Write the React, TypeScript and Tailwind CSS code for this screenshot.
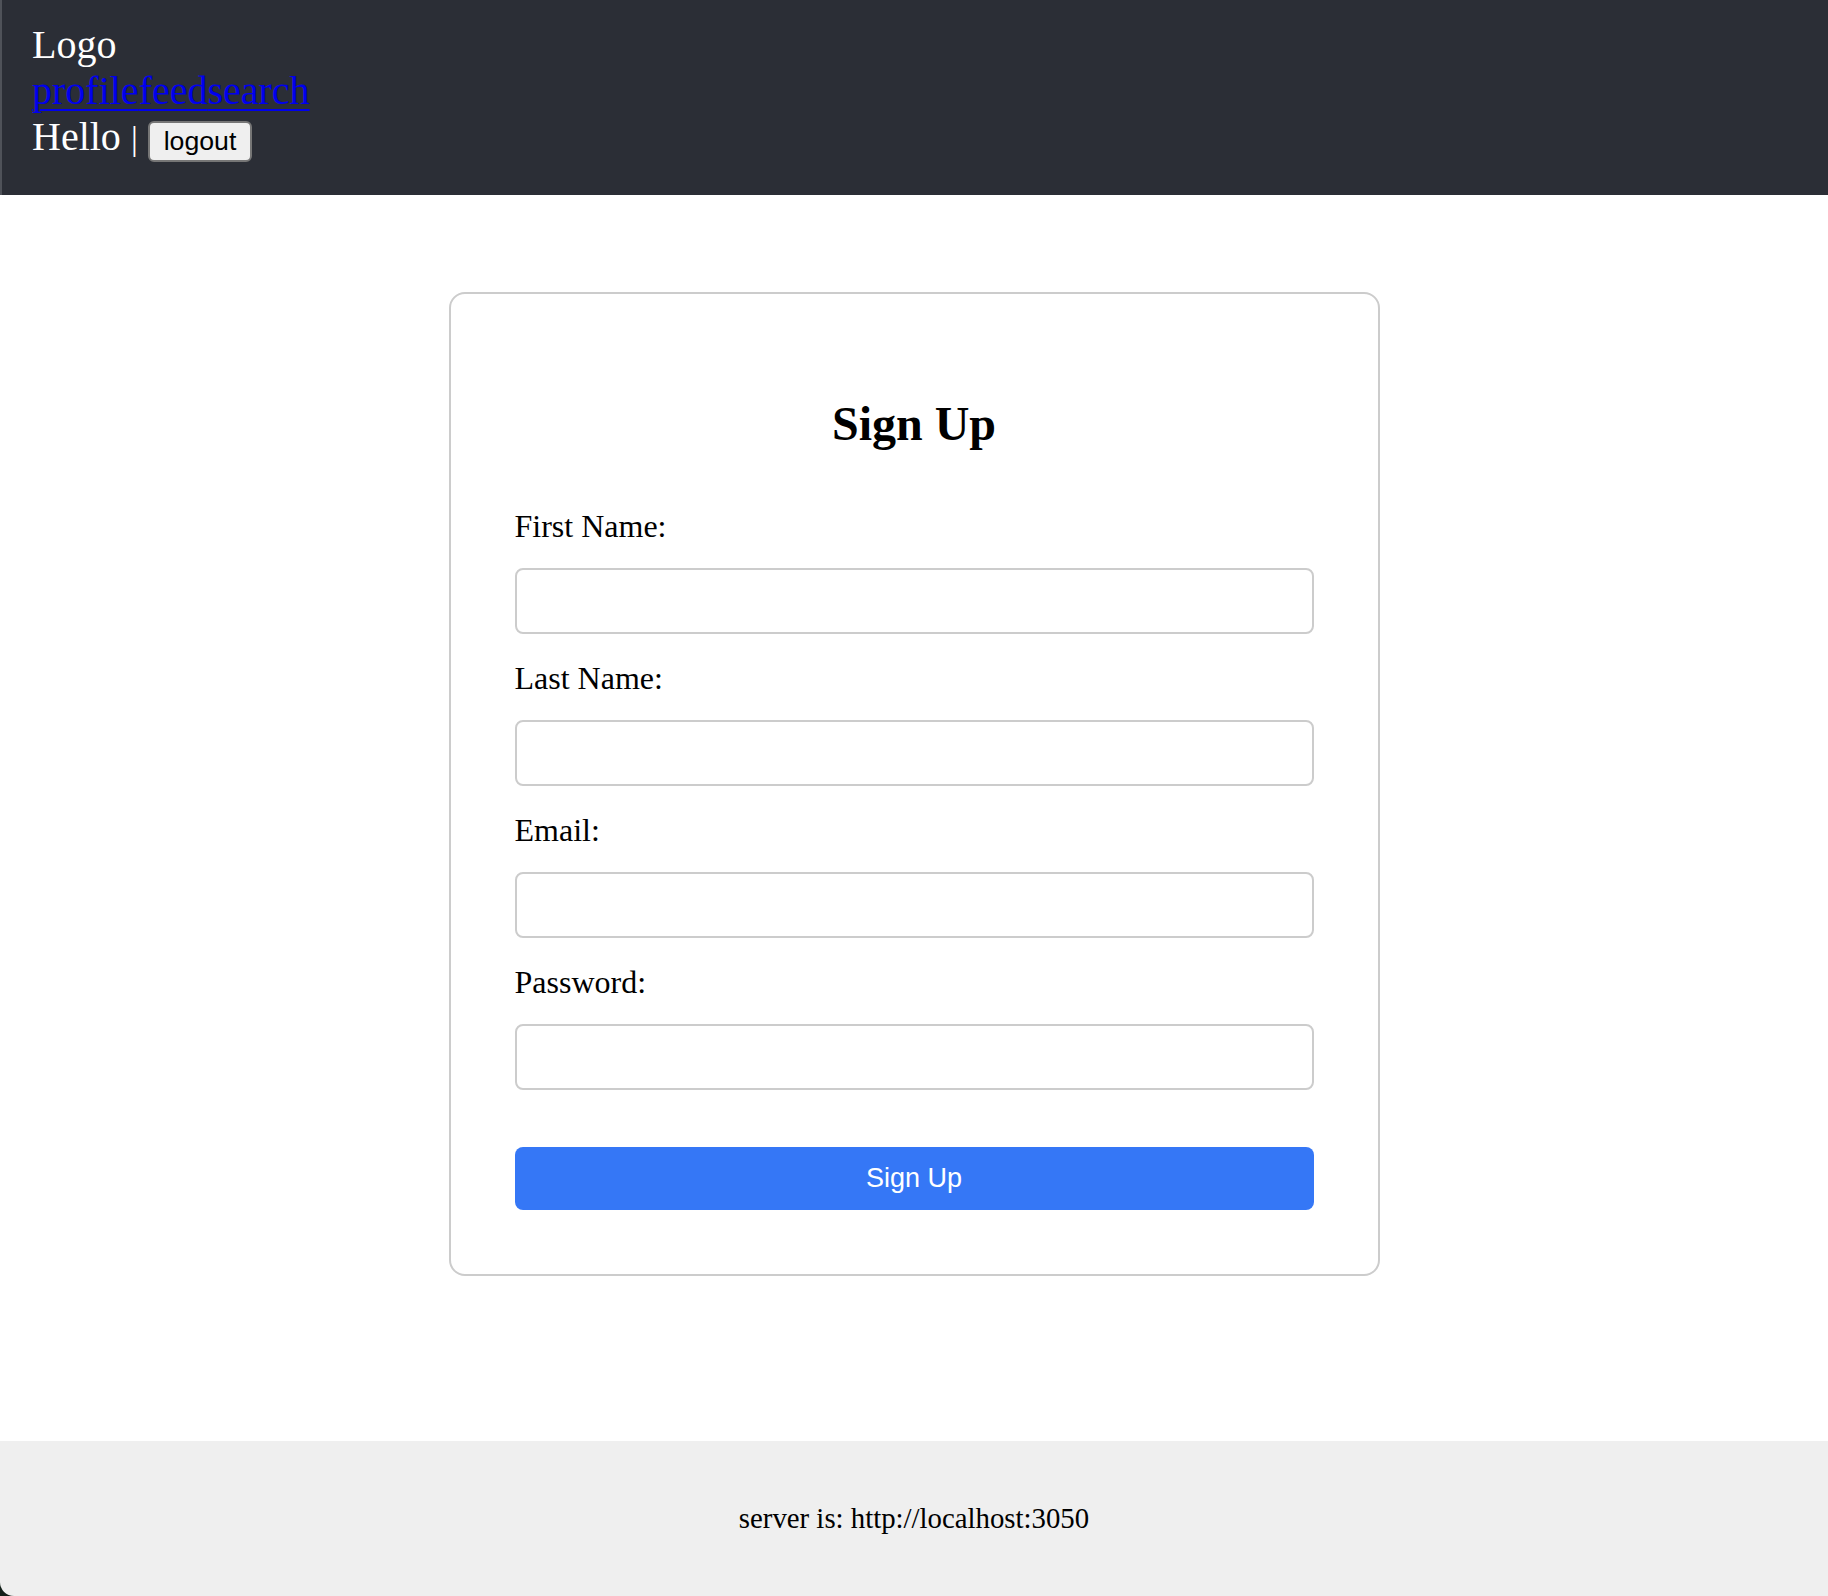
import React from "react";

const serif = "font-['Liberation_Serif',_'Times_New_Roman',_serif]";
const sans = "font-['Liberation_Sans',_Arial,_sans-serif]";

const fields = [
    { id: "firstName", label: "First Name:", type: "text" },
    { id: "lastName", label: "Last Name:", type: "text" },
    { id: "email", label: "Email:", type: "email" },
    { id: "password", label: "Password:", type: "password" },
];

function Header() {
    return (
        <header className={`h-[195px] bg-[#2b2e36] border-l-2 border-[#4f5259] pl-[30px] pt-[22px] text-white text-[40px] leading-[46px] ${serif}`}>
            <div>Logo</div>
            <div>
                <a href="#" className="text-[#0000ee] underline decoration-2 underline-offset-[5px]">profile</a>
                <a href="#" className="text-[#0000ee] underline decoration-2 underline-offset-[5px]">feed</a>
                <a href="#" className="text-[#0000ee] underline decoration-2 underline-offset-[5px]">search</a>
            </div>
            <div>
                Hello <span className="text-[34px]">|</span>{" "}
                <button className={`inline-block align-baseline bg-[#efefef] text-black border-2 border-[#767676] rounded-[6px] px-[14px] py-[3px] text-[26.67px] leading-[31px] ${sans}`}>
                    logout
                </button>
            </div>
        </header>
    );
}

function SignUpForm() {
    return (
        <div className={`w-[931px] mx-auto bg-white border-2 border-[#cccccc] rounded-[16px] px-[64px] pt-[64px] pb-[64px] ${serif}`}>
            <h2 className="mt-[38px] mb-[57px] text-center text-[48px] leading-[55px] font-bold text-black">Sign Up</h2>
            <form onSubmit={(e) => e.preventDefault()}>
                {fields.map((f) => (
                    <div key={f.id} className="mb-[26px]">
                        <label htmlFor={f.id} className="block text-[32px] leading-[37px] text-black">
                            {f.label}
                        </label>
                        <input
                            id={f.id}
                            type={f.type}
                            className="block w-full mt-[23px] h-[66px] border-2 border-[#cccccc] rounded-[8px] px-4 text-[28px] outline-none"
                        />
                    </div>
                ))}
                <button
                    type="submit"
                    className={`mt-[31px] w-full h-[63px] bg-[#3577f6] text-white rounded-[8px] text-[27px] ${sans}`}
                >
                    Sign Up
                </button>
            </form>
        </div>
    );
}

export default function App() {
    return (
        <div className="min-h-[1596px] flex flex-col bg-[#14201a]">
            <Header />
            <main className="flex-1 bg-white pt-[97px]">
                <SignUpForm />
            </main>
            <footer className={`h-[155px] bg-[#efefef] rounded-bl-[14px] flex items-center justify-center text-black text-[28.8px] ${serif}`}>
                server is: http://localhost:3050
            </footer>
        </div>
    );
}
